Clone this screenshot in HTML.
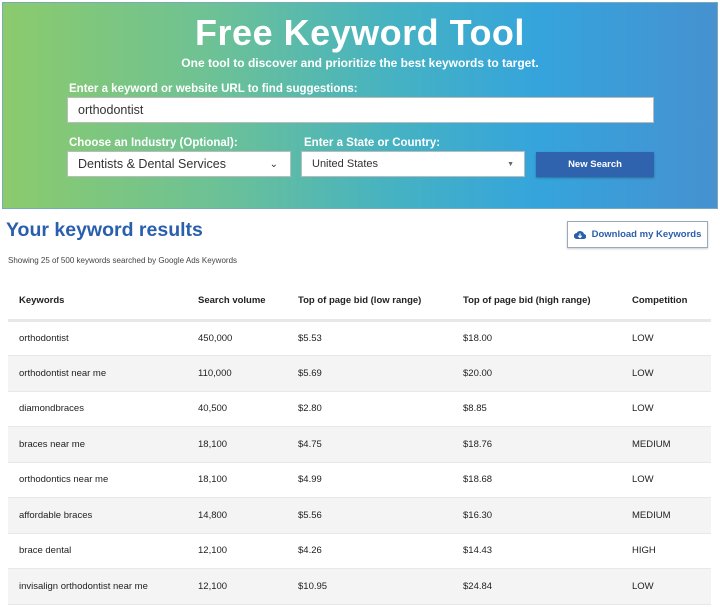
<!DOCTYPE html>
<html><head><meta charset="utf-8"><style>
*{box-sizing:border-box;margin:0;padding:0}
body{width:720px;height:607px;overflow:hidden;background:#fff;font-family:"Liberation Sans",sans-serif;position:relative}
.hero{position:absolute;left:2px;top:2px;width:716px;height:207px;background:linear-gradient(90deg,#8ccb6c 0%,#6cc196 30%,#45b2c3 55%,#35a4dc 75%,#4691d0 100%);border:1px solid #7ab}
.abs{position:absolute}
h1{position:absolute;left:0;width:720px;top:12px;text-align:center;color:#fff;font-size:36px;font-weight:bold;letter-spacing:0.5px}
.sub{top:56px;left:0;width:720px;text-align:center;color:#fff;font-size:12px;font-weight:bold}
.lbl{color:#fff;font-size:11.5px;font-weight:bold}
.inp{background:#fff;border:1px solid #bbb;font-size:12px;color:#333;padding-left:10px;display:flex;align-items:center}
.btn{background:#2f63ad;color:#fff;font-size:9.5px;font-weight:bold;display:flex;align-items:center;justify-content:center;box-shadow:0 1px 2px rgba(0,0,0,.3)}
table{position:absolute;left:8px;top:283px;width:703px;border-collapse:collapse;font-size:9.5px;color:#222}
td,th{padding-left:11px;text-align:left}
th{height:37px;font-weight:bold;border-bottom:3px solid #e8e8e8}
td{height:35.5px;border-bottom:1px solid #e8e8e8}
tr:nth-child(odd) td{background:#f4f4f4}
</style></head><body>
<div class="hero"></div>
<h1>Free Keyword Tool</h1>
<div class="abs sub">One tool to discover and prioritize the best keywords to target.</div>
<div class="abs lbl" style="left:69px;top:83px">Enter a keyword or website URL to find suggestions:</div>
<div class="abs inp" style="left:67px;top:97px;width:587px;height:26px;font-size:12.5px">orthodontist</div>
<div class="abs lbl" style="left:69px;top:137px">Choose an Industry (Optional):</div>
<div class="abs lbl" style="left:304px;top:137px">Enter a State or Country:</div>
<div class="abs inp" style="left:67px;top:151px;width:224px;height:26px;font-size:12.5px">Dentists &amp; Dental Services<span style="position:absolute;right:12px;font-size:10px">&#8964;</span></div>
<div class="abs inp" style="left:301px;top:151px;width:224px;height:26px;font-size:11px">United States<span style="position:absolute;right:10px;font-size:7px;color:#666">&#9660;</span></div>
<div class="abs btn" style="left:536px;top:152px;width:118px;height:25px">New Search</div>
<div class="abs" style="left:6px;top:219px;font-size:19.5px;font-weight:bold;color:#2a5fae">Your keyword results</div>
<div class="abs" style="left:567px;top:221px;width:141px;height:27px;border:1px solid #9ab;box-shadow:0 1px 2px rgba(0,0,0,.2);display:flex;align-items:center;justify-content:center;font-size:9.5px;font-weight:bold;color:#2a5fae">
<svg width="12" height="10" viewBox="0 0 12 10" style="margin-right:6px"><path d="M3 9a3 3 0 0 1-.3-6A4 4 0 0 1 10 4a2.5 2.5 0 0 1-.5 5z" fill="#2a5fae"/><path d="M6 3.5v4M4.3 5.8L6 7.5 7.7 5.8" stroke="#fff" stroke-width="1.2" fill="none"/></svg>Download my Keywords</div>
<div class="abs" style="left:8px;top:256px;font-size:8px;color:#444">Showing 25 of 500 keywords searched by Google Ads Keywords</div>
<table>
<tr><th style="width:179px;background:#fff">Keywords</th><th style="width:100px">Search volume</th><th style="width:165px">Top of page bid (low range)</th><th style="width:169px">Top of page bid (high range)</th><th>Competition</th></tr>
<tr><td>orthodontist</td><td>450,000</td><td>$5.53</td><td>$18.00</td><td>LOW</td></tr>
<tr><td>orthodontist near me</td><td>110,000</td><td>$5.69</td><td>$20.00</td><td>LOW</td></tr>
<tr><td>diamondbraces</td><td>40,500</td><td>$2.80</td><td>$8.85</td><td>LOW</td></tr>
<tr><td>braces near me</td><td>18,100</td><td>$4.75</td><td>$18.76</td><td>MEDIUM</td></tr>
<tr><td>orthodontics near me</td><td>18,100</td><td>$4.99</td><td>$18.68</td><td>LOW</td></tr>
<tr><td>affordable braces</td><td>14,800</td><td>$5.56</td><td>$16.30</td><td>MEDIUM</td></tr>
<tr><td>brace dental</td><td>12,100</td><td>$4.26</td><td>$14.43</td><td>HIGH</td></tr>
<tr><td>invisalign orthodontist near me</td><td>12,100</td><td>$10.95</td><td>$24.84</td><td>LOW</td></tr>
</table>
</body></html>
